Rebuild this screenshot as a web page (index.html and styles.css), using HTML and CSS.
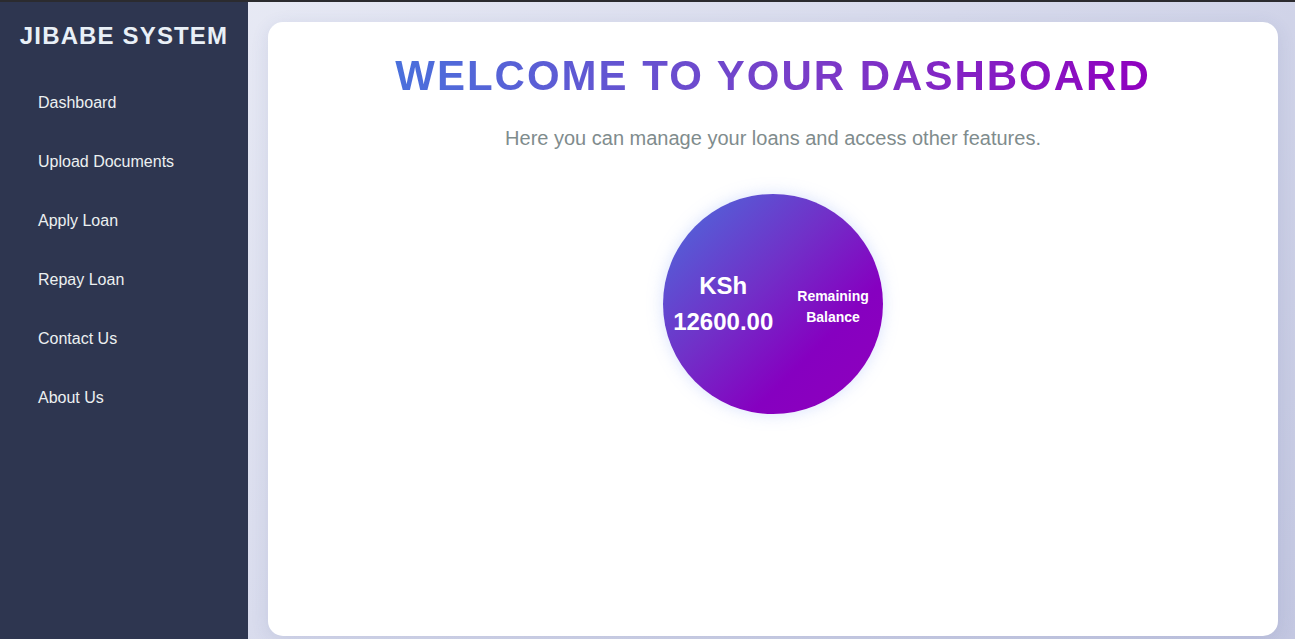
FILE: index.html
```html
<!DOCTYPE html>
<html lang="en">
<head>
<meta charset="utf-8">
<title>Jibabe System Dashboard</title>
<link rel="stylesheet" href="styles.css">
</head>
<body>
  <div class="layout">
    <aside class="sidebar">
      <h2 class="brand">JIBABE SYSTEM</h2>
      <nav>
        <ul class="nav">
          <li><a href="#">Dashboard</a></li>
          <li><a href="#">Upload Documents</a></li>
          <li><a href="#">Apply Loan</a></li>
          <li><a href="#">Repay Loan</a></li>
          <li><a href="#">Contact Us</a></li>
          <li><a href="#">About Us</a></li>
        </ul>
      </nav>
    </aside>
    <main class="main">
      <section class="card">
        <h1 class="welcome">WELCOME TO YOUR DASHBOARD</h1>
        <p class="subtitle">Here you can manage your loans and access other features.</p>
        <div class="balance">
          <div class="amount">
            <span>KSh</span>
            <span>12600.00</span>
          </div>
          <div class="label">
            <span>Remaining</span>
            <span>Balance</span>
          </div>
        </div>
      </section>
    </main>
  </div>
</body>
</html>
```

FILE: styles.css
```css
* { box-sizing: border-box; }

html, body {
  margin: 0;
  height: 100%;
}

body {
  font-family: "Liberation Sans", Arial, sans-serif;
  border-top: 2px solid #2b2b2f;
  background: linear-gradient(135deg, #eceef7 0%, #d7daec 50%, #c3c7e1 100%);
  overflow: hidden;
}

.layout {
  display: flex;
  height: 637px;
}

.sidebar {
  width: 248px;
  flex-shrink: 0;
  background: #2e3650;
  padding: 20px 16px;
  color: #ecf0f1;
}

.brand {
  margin: 0;
  text-align: center;
  white-space: nowrap;
  font-size: 24px;
  font-weight: bold;
  letter-spacing: 1.15px;
  line-height: 1.15;
  color: #e9f0f7;
}

.nav {
  list-style: none;
  margin: 33px 0 0;
  padding: 0;
  display: flex;
  flex-direction: column;
  gap: 20px;
}

.nav a {
  display: block;
  padding: 10px 22px;
  line-height: 19px;
  font-size: 16px;
  color: #ecf0f1;
  text-decoration: none;
  border-radius: 6px;
}

.main {
  flex: 1;
  padding: 20px 17px 3px 20px;
  display: flex;
}

.card {
  flex: 1;
  background: #ffffff;
  border-radius: 15px;
  box-shadow: 0 4px 18px rgba(60, 70, 140, 0.12);
  text-align: center;
  padding-top: 30px;
}

.welcome {
  margin: 0;
  font-size: 42px;
  line-height: 48px;
  font-weight: bold;
  letter-spacing: 2px;
  display: inline-block;
  background: linear-gradient(90deg, #4a70dc 0%, #7a3cc8 55%, #9000bf 100%);
  -webkit-background-clip: text;
  background-clip: text;
  color: transparent;
}

.subtitle {
  margin: 26px 0 0;
  font-size: 20px;
  line-height: 24px;
  color: #7f8c8d;
}

.balance {
  width: 220px;
  height: 220px;
  margin: 44px auto 0;
  border-radius: 50%;
  background: linear-gradient(135deg, #4a6fdc 0%, #7130c8 42%, #8600c0 70%, #9000bd 100%);
  box-shadow: 0 0 16px rgba(140, 170, 250, 0.35);
  display: flex;
  align-items: center;
  justify-content: center;
  gap: 24px;
  color: #ffffff;
  font-weight: bold;
  padding-right: 4px;
}

.amount {
  display: flex;
  flex-direction: column;
  font-size: 24px;
  line-height: 36px;
}

.label {
  display: flex;
  flex-direction: column;
  font-size: 14px;
  line-height: 21px;
  margin-top: 6px;
}
```
